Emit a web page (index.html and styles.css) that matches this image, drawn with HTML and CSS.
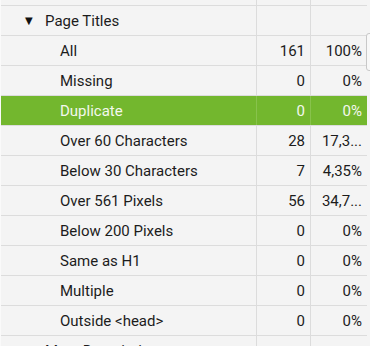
FILE: index.html
```html
<!DOCTYPE html>
<html lang="en">
<head>
    <meta charset="UTF-8">
    <title>Page Titles</title>
    <link rel="stylesheet" href="styles.css">
</head>
<body>
    <div class="tree">
        <div class="row top">
            <div class="cell name"></div>
            <div class="cell num"></div>
            <div class="cell pct"></div>
        </div>
        <div class="row">
            <div class="cell name level1"><span class="arrow">&#9660;</span>Page Titles</div>
            <div class="cell num"></div>
            <div class="cell pct"></div>
        </div>
        <div class="row">
            <div class="cell name level2">All</div>
            <div class="cell num">161</div>
            <div class="cell pct">100%</div>
        </div>
        <div class="row">
            <div class="cell name level2">Missing</div>
            <div class="cell num">0</div>
            <div class="cell pct">0%</div>
        </div>
        <div class="row selected">
            <div class="cell name level2">Duplicate</div>
            <div class="cell num">0</div>
            <div class="cell pct">0%</div>
        </div>
        <div class="row">
            <div class="cell name level2">Over 60 Characters</div>
            <div class="cell num">28</div>
            <div class="cell pct">17,3...</div>
        </div>
        <div class="row">
            <div class="cell name level2">Below 30 Characters</div>
            <div class="cell num">7</div>
            <div class="cell pct">4,35%</div>
        </div>
        <div class="row">
            <div class="cell name level2">Over 561 Pixels</div>
            <div class="cell num">56</div>
            <div class="cell pct">34,7...</div>
        </div>
        <div class="row">
            <div class="cell name level2">Below 200 Pixels</div>
            <div class="cell num">0</div>
            <div class="cell pct">0%</div>
        </div>
        <div class="row">
            <div class="cell name level2">Same as H1</div>
            <div class="cell num">0</div>
            <div class="cell pct">0%</div>
        </div>
        <div class="row">
            <div class="cell name level2">Multiple</div>
            <div class="cell num">0</div>
            <div class="cell pct">0%</div>
        </div>
        <div class="row">
            <div class="cell name level2">Outside &lt;head&gt;</div>
            <div class="cell num">0</div>
            <div class="cell pct">0%</div>
        </div>
        <div class="row">
            <div class="cell name level1"><span class="arrow">&#9654;</span>Meta Description</div>
            <div class="cell num"></div>
            <div class="cell pct"></div>
        </div>
    </div>
    <div class="scroll-thumb"></div>
</body>
</html>
```

FILE: styles.css
```css
body {
    margin: 0;
    background-color: #f4f4f4;
    font-family: Roboto, "Liberation Sans", sans-serif;
    font-size: 15px;
    color: #1c1c1c;
    overflow: hidden;
}
.tree {
    width: 366px;
    display: flex;
    flex-direction: column;
    border-left: 1px solid #fafafa;
}
.row {
    display: flex;
    height: 29px;
    border-bottom: 1px solid #dcdcdc;
}
.row.top {
    height: 5px;
}
.cell {
    display: flex;
    align-items: center;
    box-sizing: border-box;
    white-space: nowrap;
}
.name {
    width: 256px;
    border-right: 1px solid #dcdcdc;
}
.num {
    width: 54px;
    justify-content: flex-end;
    padding-right: 5px;
    border-right: 1px solid #dcdcdc;
}
.pct {
    flex: 1;
    justify-content: flex-end;
    padding-right: 5px;
}
.level1 {
    padding-left: 24px;
}
.level2 {
    padding-left: 59px;
}
.arrow {
    font-family: "DejaVu Sans", sans-serif;
    font-size: 10px;
    width: 20px;
    color: #111;
}
.selected {
    background-color: #73b72e;
    color: #f4f8ee;
}
.selected .cell {
    border-right-color: #88c24c;
}
.scroll-thumb {
    position: absolute;
    left: 366px;
    top: 33px;
    width: 10px;
    height: 36px;
    border: 1px solid #c8c8c8;
    border-radius: 3px;
    background-color: #f8f8f8;
}
```
